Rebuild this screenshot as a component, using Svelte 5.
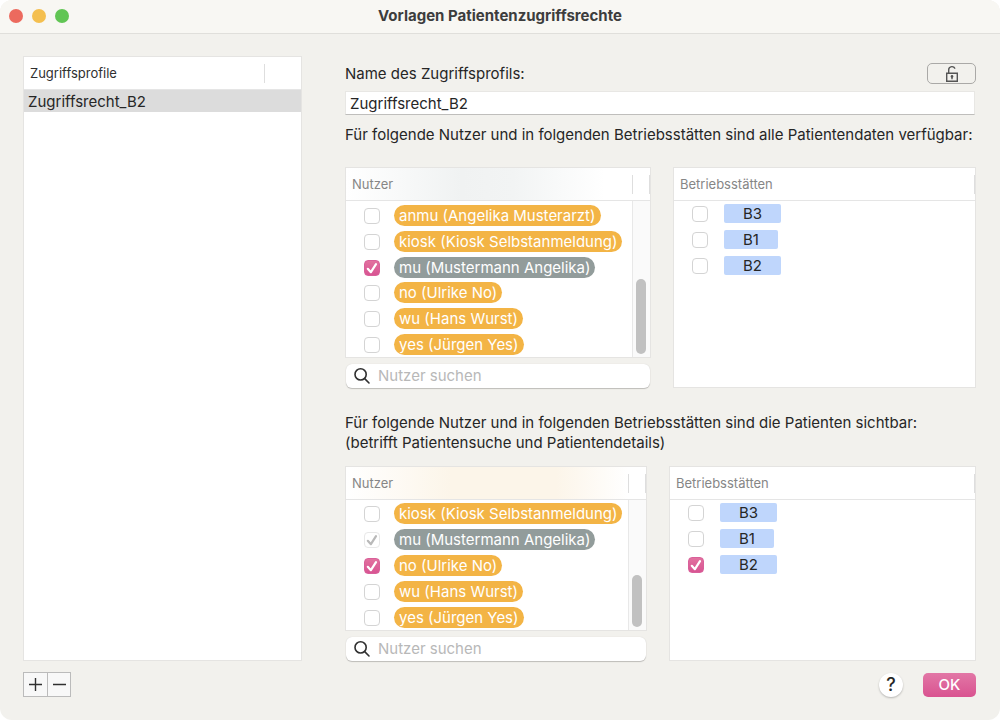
<script>
	let profileName = $state("Zugriffsrecht_B2");

	let sections = $state([
		{
			id: "daten",
			lines: ["Für folgende Nutzer und in folgenden Betriebsstätten sind alle Patientendaten verfügbar:"],
			search: "",
			users: [
				{ label: "anmu (Angelika Musterarzt)", checked: false },
				{ label: "kiosk (Kiosk Selbstanmeldung)", checked: false },
				{ label: "mu (Mustermann Angelika)", checked: true, self: true },
				{ label: "no (Ulrike No)", checked: false },
				{ label: "wu (Hans Wurst)", checked: false },
				{ label: "yes (Jürgen Yes)", checked: false }
			],
			sites: [
				{ label: "B3", checked: false },
				{ label: "B1", checked: false },
				{ label: "B2", checked: false }
			]
		},
		{
			id: "sichtbar",
			lines: [
				"Für folgende Nutzer und in folgenden Betriebsstätten sind die Patienten sichtbar:",
				"(betrifft Patientensuche und Patientendetails)"
			],
			search: "",
			users: [
				{ label: "kiosk (Kiosk Selbstanmeldung)", checked: false },
				{ label: "mu (Mustermann Angelika)", checked: true, self: true, locked: true },
				{ label: "no (Ulrike No)", checked: true },
				{ label: "wu (Hans Wurst)", checked: false },
				{ label: "yes (Jürgen Yes)", checked: false }
			],
			sites: [
				{ label: "B3", checked: false },
				{ label: "B1", checked: false },
				{ label: "B2", checked: true }
			]
		}
	]);
</script>

{#snippet tick(item)}
	<span class="tick">
		<input type="checkbox" bind:checked={item.checked} disabled={item.locked} />
		<svg viewBox="0 0 16 16" aria-hidden="true">
			<path d="M3.8 8.8 L6.9 12.2 L12 4.2" />
		</svg>
	</span>
{/snippet}

<div class="window">
	<header class="titlebar">
		<div class="lights">
			<button class="light red" aria-label="Schließen"></button>
			<button class="light yellow" aria-label="Minimieren"></button>
			<button class="light green" aria-label="Vergrößern"></button>
		</div>
		<h1>Vorlagen Patientenzugriffsrechte</h1>
	</header>

	<main>
		<aside class="panel profiles">
			<div class="panel-head">
				<span>Zugriffsprofile</span>
				<i class="divider"></i>
			</div>
			<button class="profile">Zugriffsrecht_B2</button>
		</aside>

		<div class="detail">
			<div class="name-row">
				<label for="profile-name">Name des Zugriffsprofils:</label>
				<button class="lock" aria-label="Entsperren">
					<svg width="14" height="18" viewBox="0 0 14 18" aria-hidden="true">
						<path d="M1.7 8.2 H12.3 V16.3 H1.7 Z M3.7 8 V4.8 C3.7 .8 9.6 .6 9.8 3.8" />
						<circle cx="7" cy="11.4" r="1.3" />
						<path d="M7 11.5 V14.2" />
					</svg>
				</button>
			</div>
			<input class="name" id="profile-name" type="text" bind:value={profileName} />

			{#each sections as section (section.id)}
				<section class={section.id}>
					<p>
						{#each section.lines as line}
							<span>{line}</span>
						{/each}
					</p>
					<div class="lists">
						<div class="users">
							<div class="panel">
								<div class="panel-head tinted">
									<span>Nutzer</span>
									<span class="dividers">
										<i class="divider"></i>
										<i class="divider"></i>
									</span>
								</div>
								<div class="scroller">
									<div class="rows">
										{#each section.users as user}
											<label class="row">
												{@render tick(user)}
												<span class="pill" class:self={user.self}>{user.label}</span>
											</label>
										{/each}
									</div>
									<div class="track"><div class="thumb"></div></div>
								</div>
							</div>
							<label class="search">
								<svg width="18" height="18" viewBox="0 0 18 18" aria-hidden="true">
									<circle cx="7.6" cy="7.4" r="5.6" />
									<path d="M11.7 11.6 L16 16" />
								</svg>
								<input
									type="text"
									placeholder="Nutzer suchen"
									aria-label="Nutzer suchen"
									bind:value={section.search}
								/>
							</label>
						</div>

						<div class="panel sites">
							<div class="panel-head">
								<span>Betriebsstätten</span>
								<i class="divider"></i>
							</div>
							{#each section.sites as site}
								<label class="row">
									{@render tick(site)}
									<span class="site">{site.label}</span>
								</label>
							{/each}
						</div>
					</div>
				</section>
			{/each}
		</div>
	</main>

	<footer>
		<div class="stepper">
			<button aria-label="Profil hinzufügen">
				<svg width="13" height="13" viewBox="0 0 13 13"><path d="M0 6.5 H13 M6.5 0 V13" /></svg>
			</button>
			<button aria-label="Profil entfernen">
				<svg width="13" height="13" viewBox="0 0 13 13"><path d="M0 6.5 H13" /></svg>
			</button>
		</div>
		<div class="actions">
			<button class="help">?</button>
			<button class="ok">OK</button>
		</div>
	</footer>
</div>

<style>
	:global(body) {
		background: #fff;
	}

	.window,
	.window * {
		box-sizing: border-box;
	}

	.window {
		background: #f2f1ed;
		border-radius: 12px;
		color: #262626;
		display: flex;
		flex-direction: column;
		font-family: Inter, "Liberation Sans", sans-serif;
		font-size: 15px;
		line-height: 20px;
		min-height: 100vh;
		overflow: hidden;
	}

	button,
	input {
		color: inherit;
		font: inherit;
		margin: 0;
	}

	button {
		padding: 0;
	}

	svg {
		fill: none;
		stroke: #303030;
	}

	.titlebar {
		align-items: center;
		background: #f8f7f3;
		border-bottom: 1px solid #e0dfdb;
		display: grid;
		grid-template-columns: 1fr auto 1fr;
		height: 34px;
		padding: 0 9px 1px;
	}

	.titlebar h1 {
		color: #3d3d3d;
		font-size: 15px;
		font-weight: 700;
		margin: 0;
	}

	.lights {
		display: flex;
		gap: 9px;
	}

	.light {
		border: 0;
		border-radius: 50%;
		height: 14px;
		width: 14px;
	}

	.red {
		background: #ec6a5e;
	}

	.yellow {
		background: #f4bf4f;
	}

	.green {
		background: #61c554;
	}

	main {
		display: grid;
		flex: 1;
		gap: 43px;
		grid-template-columns: 279fr 631fr;
		padding: 22px 24px 0 23px;
	}

	.panel {
		background: #fff;
		border: 1px solid #e5e4e2;
		display: flex;
		flex-direction: column;
	}

	.panel-head {
		align-items: center;
		border-bottom: 1px solid #e5e5e5;
		color: #868686;
		display: flex;
		flex: none;
		font-size: 13px;
		height: 33px;
		justify-content: space-between;
		padding-left: 6px;
	}

	.dividers {
		display: flex;
		gap: 16px;
	}

	.divider {
		background: #dedede;
		height: 19px;
		width: 1px;
	}

	.profiles .panel-head {
		color: #303030;
		padding-right: 36px;
	}

	.profile {
		background: #dcdcdc;
		border: 0;
		height: 22px;
		padding: 2px 4px 0;
		text-align: left;
	}

	.detail {
		display: flex;
		flex-direction: column;
	}

	.name-row {
		align-items: center;
		display: flex;
		height: 35px;
		justify-content: space-between;
	}

	.lock {
		align-items: center;
		background: transparent;
		border: 1px solid #aaa9a7;
		border-radius: 5px;
		display: flex;
		height: 21px;
		justify-content: center;
		width: 49px;
	}

	.lock svg {
		stroke: #555;
		stroke-width: 1.4;
	}

	.lock circle {
		fill: #555;
		stroke: none;
	}

	.name {
		background: #fff;
		border: 1px solid #e8e7e4;
		border-bottom-color: #bfbebc;
		height: 24px;
		margin-right: 1px;
		outline: none;
		padding: 0 4px;
	}

	section {
		display: flex;
		flex: 1 1 0;
		flex-direction: column;
	}

	p {
		margin: 0;
		padding: 10px 0 22px;
	}

	.sichtbar p {
		padding: 25px 0 13px;
	}

	p span {
		display: block;
	}

	.lists {
		display: grid;
		flex: 1;
		gap: 22px;
		grid-template-columns: 306fr 303fr;
	}

	.sichtbar .lists {
		grid-template-columns: 302fr 307fr;
	}

	.users {
		display: flex;
		flex-direction: column;
		gap: 6px;
	}

	.users .panel {
		flex: 1;
	}

	.tinted {
		background: linear-gradient(90deg, #fff, #f0f2f2 38%, #f2f4f4 55%, #fff 85%);
	}

	.sichtbar .tinted {
		background: linear-gradient(90deg, #fff, #fcf5e9 35%, #fcf5e9 70%, #fff 94%);
	}

	.scroller {
		display: flex;
		flex: 1;
	}

	.rows {
		display: flex;
		flex: 1;
		flex-direction: column;
		padding-top: 2px;
	}

	.sichtbar .rows {
		padding-top: 0;
	}

	.row {
		align-items: center;
		display: flex;
		gap: 14px;
		padding-left: 18px;
	}

	.rows .row {
		flex: 1;
	}

	.tick {
		display: flex;
		padding-top: 1px;
		position: relative;
		width: 16px;
	}

	.tick input {
		appearance: none;
		background: #fff;
		border: 1px solid #d4d4d4;
		border-radius: 4px;
		height: 16px;
		width: 16px;
	}

	.tick input:checked {
		background: linear-gradient(#e2719f, #d85492);
		border-color: #d9609a;
	}

	.tick input:disabled {
		background: #fff;
		border-color: #e8e8e8;
	}

	.tick svg {
		bottom: 0;
		display: none;
		height: 16px;
		left: 0;
		pointer-events: none;
		position: absolute;
		stroke: #fff;
		stroke-linecap: round;
		stroke-linejoin: round;
		stroke-width: 2.2;
		width: 16px;
	}

	.tick input:checked + svg {
		display: block;
	}

	.tick input:disabled + svg {
		stroke: #b9b9b9;
	}

	.pill {
		background: #f3b445;
		border-radius: 11px;
		color: #fff;
		line-height: 21px;
		padding: 0 5px;
		white-space: nowrap;
	}

	.pill.self {
		background: #929c9b;
	}

	.track {
		background: #fafafa;
		border-left: 1px solid #e8e8e8;
		display: flex;
		flex-direction: column;
		justify-content: flex-end;
		padding: 0 4px 3px 3px;
		width: 18px;
	}

	.thumb {
		background: #c1c1c1;
		border-radius: 5px;
		height: 49%;
	}

	.sichtbar .thumb {
		height: 41%;
	}

	.search {
		align-items: center;
		background: #fff;
		border-radius: 6px;
		box-shadow: 0 1px 1px #bdbcb9, 0 0 1px #cfcecb;
		display: flex;
		gap: 7px;
		height: 24px;
		margin: 0 1px;
		padding-left: 7px;
	}

	.search svg {
		flex: none;
		stroke-linecap: round;
		stroke-width: 1.6;
	}

	.search input {
		background: transparent;
		border: 0;
		flex: 1;
		min-width: 0;
		outline: none;
		padding: 0;
	}

	.search input::placeholder {
		color: #b8b8b8;
	}

	.sites .row {
		gap: 16px;
		height: 26px;
		padding-bottom: 2px;
	}

	.site {
		background: #bfd6fc;
		border-radius: 2px;
		line-height: 19px;
		padding: 0 19px;
	}

	footer {
		align-items: center;
		display: flex;
		height: 59px;
		justify-content: space-between;
		padding: 0 24px 12px 23px;
	}

	.stepper {
		display: flex;
	}

	.stepper button {
		align-items: center;
		background: #f8f8f8;
		border: 1px solid #bbb;
		display: flex;
		height: 25px;
		justify-content: center;
		width: 25px;
	}

	.stepper button + button {
		border-left: 0;
		width: 23px;
	}

	.stepper svg {
		stroke-width: 1.4;
	}

	.actions {
		align-items: center;
		display: flex;
		gap: 20px;
	}

	.help {
		background: #fff;
		border: 0;
		border-radius: 50%;
		box-shadow: 0 1px 2px #b5b4b1;
		font-size: 18px;
		font-weight: 500;
		height: 24px;
		width: 24px;
	}

	.ok {
		background: linear-gradient(#e277a6, #d95390);
		border: 0;
		border-radius: 5px;
		color: #fff;
		font-weight: 500;
		height: 24px;
		width: 53px;
	}
</style>
